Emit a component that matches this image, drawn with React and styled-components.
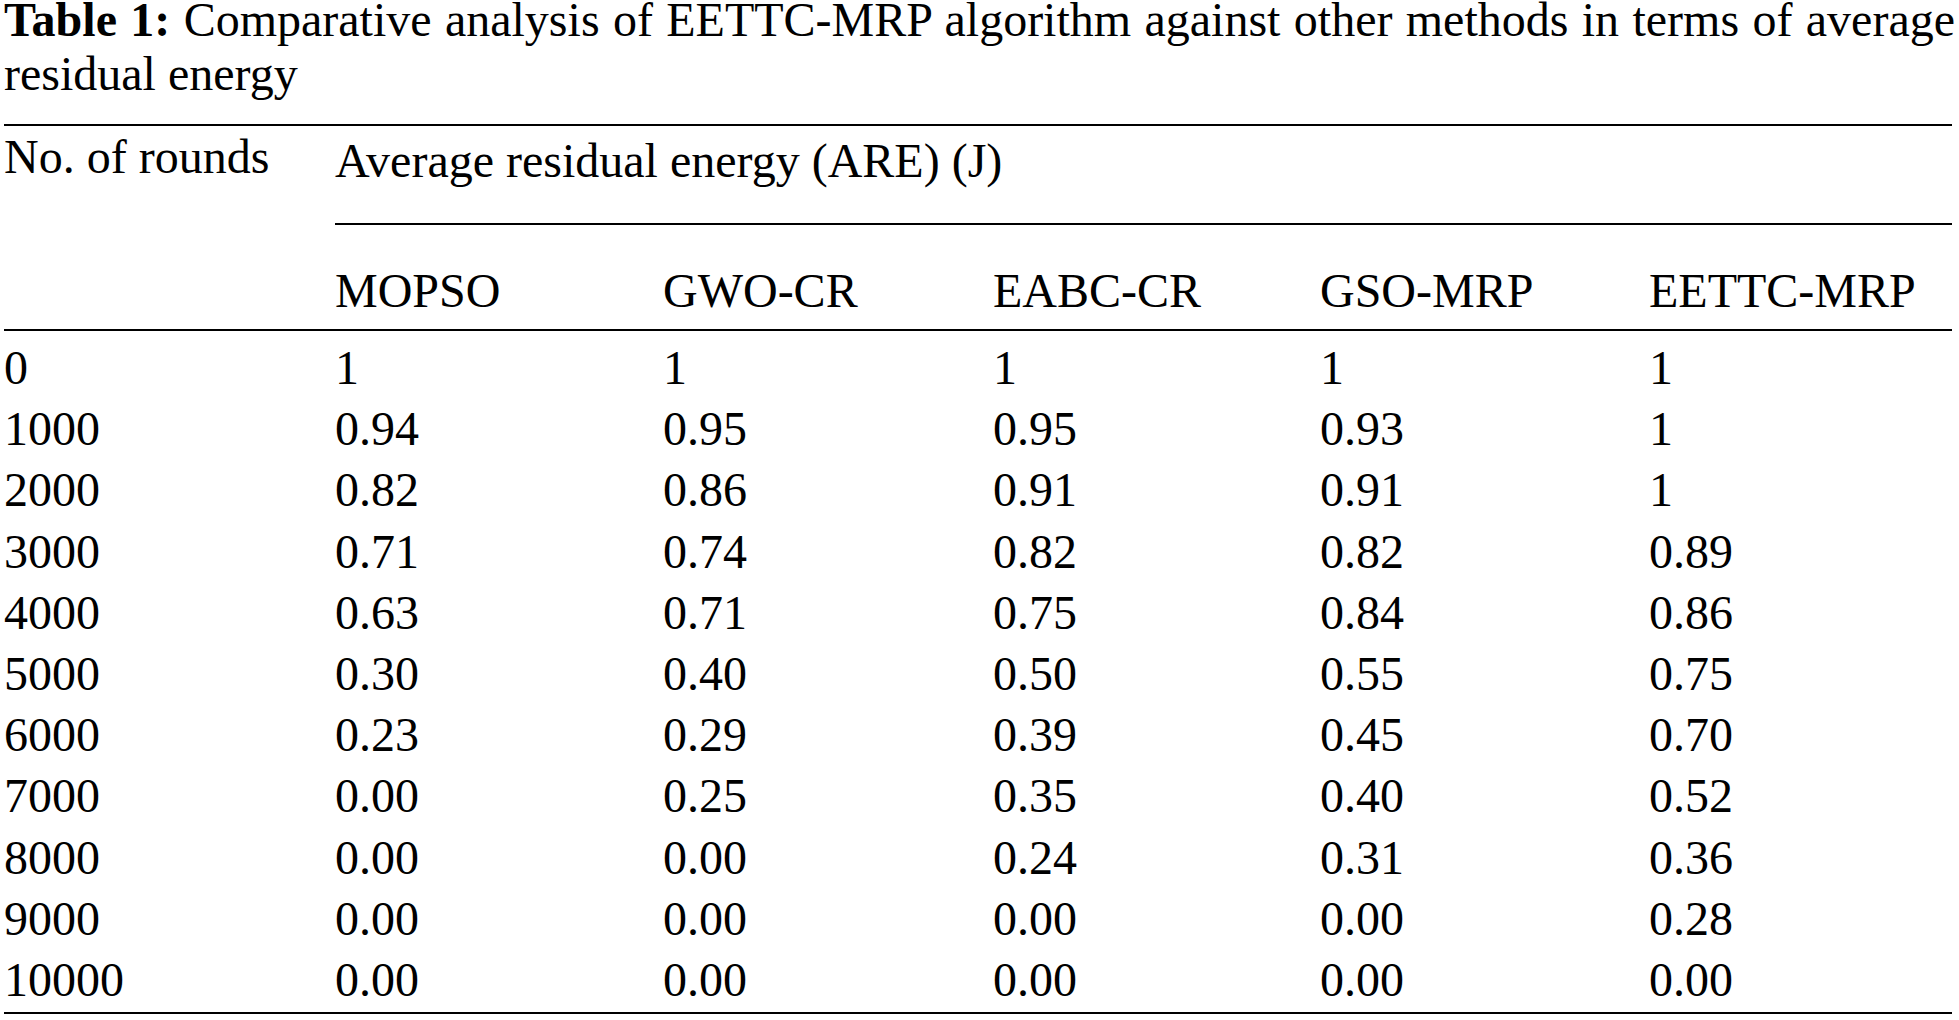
import React from "react";
import styled, { createGlobalStyle } from "styled-components";

const GlobalStyle = createGlobalStyle`
  html, body {
    margin: 0;
    padding: 0;
    background: #ffffff;
  }
  body {
    font-family: "Liberation Serif", "Times New Roman", serif;
    color: #000000;
  }
`;

const Page = styled.div`
  width: 1948px;
  padding: 0 4px;
`;

const Caption = styled.p`
  margin: -7px -3px 23px 0;
  font-size: 48px;
  line-height: 54px;
  text-align: justify;
`;

const CaptionLabel = styled.b`
  font-weight: 700;
`;

const Table = styled.table`
  width: 1948px;
  table-layout: fixed;
  border-collapse: separate;
  border-spacing: 0;
  font-size: 48px;
`;

const HeadCell = styled.th`
  padding: ${(p) => p.$pad || "0"};
  text-align: left;
  vertical-align: top;
  font-weight: 400;
  line-height: 54px;
  white-space: nowrap;
  border-top: ${(p) => (p.$ruleTop ? "2px solid #000" : "none")};
  border-bottom: ${(p) => (p.$ruleBottom ? "2px solid #000" : "none")};
`;

const Cell = styled.td`
  padding: ${(p) => (p.$first ? "6px 0 0" : p.$last ? "0 0 2px" : "0")};
  line-height: 61.2px;
  white-space: nowrap;
  border-bottom: ${(p) => (p.$last ? "2px solid #000" : "none")};
`;

const methods = ["MOPSO", "GWO-CR", "EABC-CR", "GSO-MRP", "EETTC-MRP"];

const rows = [
  ["0", "1", "1", "1", "1", "1"],
  ["1000", "0.94", "0.95", "0.95", "0.93", "1"],
  ["2000", "0.82", "0.86", "0.91", "0.91", "1"],
  ["3000", "0.71", "0.74", "0.82", "0.82", "0.89"],
  ["4000", "0.63", "0.71", "0.75", "0.84", "0.86"],
  ["5000", "0.30", "0.40", "0.50", "0.55", "0.75"],
  ["6000", "0.23", "0.29", "0.39", "0.45", "0.70"],
  ["7000", "0.00", "0.25", "0.35", "0.40", "0.52"],
  ["8000", "0.00", "0.00", "0.24", "0.31", "0.36"],
  ["9000", "0.00", "0.00", "0.00", "0.00", "0.28"],
  ["10000", "0.00", "0.00", "0.00", "0.00", "0.00"],
];

const colWidths = [331, 328, 330, 327, 329, 303];

export default function App() {
  return (
    <Page>
      <GlobalStyle />
      <Caption>
        <CaptionLabel>Table 1:</CaptionLabel> Comparative analysis of
        EETTC-MRP algorithm against other methods in terms of average residual
        energy
      </Caption>
      <Table>
        <colgroup>
          {colWidths.map((w, i) => (
            <col key={i} style={{ width: w }} />
          ))}
        </colgroup>
        <thead>
          <tr>
            <HeadCell rowSpan={2} $pad="4px 0 0" $ruleTop $ruleBottom>
              No. of rounds
            </HeadCell>
            <HeadCell colSpan={5} $pad="8px 0 35px" $ruleTop $ruleBottom>
              Average residual energy (ARE) (J)
            </HeadCell>
          </tr>
          <tr>
            {methods.map((m) => (
              <HeadCell key={m} $pad="39px 0 11px" $ruleBottom>
                {m}
              </HeadCell>
            ))}
          </tr>
        </thead>
        <tbody>
          {rows.map((r, ri) => (
            <tr key={r[0]}>
              {r.map((v, ci) => (
                <Cell
                  key={ci}
                  $first={ri === 0}
                  $last={ri === rows.length - 1}
                >
                  {v}
                </Cell>
              ))}
            </tr>
          ))}
        </tbody>
      </Table>
    </Page>
  );
}
